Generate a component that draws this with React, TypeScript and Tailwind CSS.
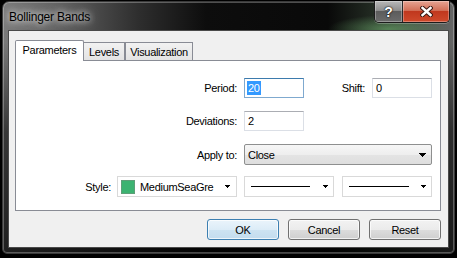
import React from "react";

function ArrowSmall() {
  return (
    <svg width="5" height="3" viewBox="0 0 5 3" shapeRendering="crispEdges">
      <rect x="0" y="0" width="5" height="1" fill="#000" />
      <rect x="1" y="1" width="3" height="1" fill="#000" />
      <rect x="2" y="2" width="1" height="1" fill="#000" />
    </svg>
  );
}

function ArrowBig() {
  return (
    <svg width="7" height="4" viewBox="0 0 7 4" shapeRendering="crispEdges">
      <rect x="0" y="0" width="7" height="1" fill="#000" />
      <rect x="1" y="1" width="5" height="1" fill="#000" />
      <rect x="2" y="2" width="3" height="1" fill="#000" />
      <rect x="3" y="3" width="1" height="1" fill="#000" />
    </svg>
  );
}

function LineSelect({ lineW }: { lineW: number }) {
  return (
    <div className="w-[90px] h-full border border-[#d9d9d9] bg-white flex items-center pl-[6px] pr-[5px]">
      <div className="h-[1px] bg-black" style={{ width: lineW }} />
      <div className="ml-auto flex items-center">
        <ArrowSmall />
      </div>
    </div>
  );
}

export default function App() {
  return (
    <div className="w-[457px] h-[258px] bg-black pt-[1px] pl-[2px] overflow-hidden font-['Liberation_Sans',Arial,sans-serif] text-[11px] tracking-[-0.3px] text-black">
      <div className="w-[453px] h-[253px] rounded-t-[7px] rounded-b-[5px] border border-[#3a3a3a] shadow-[inset_0_0_0_1px_rgba(255,255,255,0.28)] flex flex-col bg-[linear-gradient(180deg,rgba(0,0,0,0)_0px,rgba(0,0,0,0)_40px,rgba(0,0,0,0.55)_130px,rgba(0,0,0,0.75)_100%),radial-gradient(60px_14px_at_385px_27px,rgba(120,190,120,0.55),rgba(120,190,120,0)),linear-gradient(90deg,#7a7a7a_0%,#626262_12%,#2e2e2e_30%,#0d0d0d_45%,#090909_72%,#2c382c_86%,#666666_100%)]">
        {/* title bar */}
        <div className="h-[28px] shrink-0 flex items-start pl-[6px] pr-[4px]">
          <div className="mt-[7px] text-[12px] tracking-[-0.2px] leading-[16px] [text-shadow:0_0_6px_rgba(255,255,255,0.95),0_0_12px_rgba(255,255,255,0.7)]">
            Bollinger Bands
          </div>
          <div className="ml-auto -mt-[1px] w-[76px] h-[22px] flex rounded-b-[5px] border border-t-0 border-[#1c1c1c] overflow-hidden shadow-[0_1px_0_rgba(255,255,255,0.25)]">
            <div className="w-[28px] h-full flex items-center justify-center border-r border-[#2a2a2a] bg-[linear-gradient(180deg,#b8b8b8_0%,#8e8e8e_45%,#5c5c5c_50%,#6c6c6c_100%)] shadow-[inset_0_0_0_1px_rgba(255,255,255,0.3)]">
              <span className="font-['Liberation_Sans',Arial,sans-serif] font-bold text-[14px] leading-none tracking-normal text-white [text-shadow:0_0_1px_#000,0_0_2px_#000]">
                ?
              </span>
            </div>
            <div className="flex-1 h-full flex items-center justify-center bg-[linear-gradient(180deg,#e6a493_0%,#d27058_45%,#c0381e_50%,#cf4a2c_100%)] shadow-[inset_0_0_0_1px_rgba(255,255,255,0.3)]">
              <svg width="13" height="11" viewBox="0 0 13 11">
                <path d="M2.5 2 L10.5 9 M10.5 2 L2.5 9" stroke="#3a1a14" strokeWidth="4.4" strokeLinecap="square" />
                <path d="M2.5 2 L10.5 9 M10.5 2 L2.5 9" stroke="#ffffff" strokeWidth="2.4" strokeLinecap="square" />
              </svg>
            </div>
          </div>
        </div>

        {/* client area */}
        <div className="mx-[5px] h-[218px] border border-[#4a4a4a] bg-[#f0f0f0] flex flex-col pl-[6px] pt-[9px]">
          {/* tabs */}
          <div className="flex items-end h-[20px]">
            <div className="relative z-10 w-[69px] h-[21px] -mb-[1px] bg-white border border-b-0 border-[#898c95] rounded-t-[2px] text-center pt-[2px] leading-[14px]">
              Parameters
            </div>
            <div className="w-[41px] h-[18px] border-t border-r border-[#898c95] bg-[linear-gradient(180deg,#f2f2f2,#e3e3e3)] text-center pt-[2px] leading-[14px]">
              Levels
            </div>
            <div className="w-[68px] h-[18px] border border-b-0 border-[#898c95] bg-[linear-gradient(180deg,#f2f2f2,#e3e3e3)] text-center pt-[2px] leading-[14px]">
              Visualization
            </div>
          </div>

          {/* panel */}
          <div className="w-[426px] h-[151px] bg-white border border-[#898c95] flex flex-col pt-[17px] leading-[14px]">
            <div className="flex items-center h-[20px]">
              <div className="w-[221px] text-right">Period:</div>
              <div className="ml-[7px] w-[60px] h-full border border-[#7fa9cf] border-t-[#3d7bad] bg-white flex items-center pl-[2px]">
                <span className="bg-[#3399ff] text-white px-[1px] leading-[14px]">20</span>
              </div>
              <div className="w-[68px] text-right pr-[7px]">Shift:</div>
              <div className="w-[60px] h-full border border-[#dbdfe6] border-t-[#abadb3] bg-white flex items-center pl-[3px]">
                0
              </div>
            </div>

            <div className="mt-[13px] flex items-center h-[20px]">
              <div className="w-[221px] text-right">Deviations:</div>
              <div className="ml-[7px] w-[60px] h-full border border-[#dbdfe6] border-t-[#abadb3] bg-white flex items-center pl-[3px]">
                2
              </div>
            </div>

            <div className="mt-[13px] flex items-center h-[21px]">
              <div className="w-[221px] text-right">Apply to:</div>
              <div className="ml-[7px] w-[188px] h-full rounded-[2px] border border-[#8e8f8f] bg-[linear-gradient(180deg,#f6f6f6_0%,#eeeeee_50%,#e4e4e4_51%,#dedede_100%)] flex items-center pl-[3px] pr-[5px]">
                <span>Close</span>
                <div className="ml-auto flex items-center">
                  <ArrowBig />
                </div>
              </div>
            </div>

            <div className="mt-[11px] flex items-center h-[21px]">
              <div className="w-[95px] text-right">Style:</div>
              <div className="ml-[6px] w-[120px] h-full border border-[#d9d9d9] bg-white flex items-center pl-[3px] pr-[6px]">
                <div className="w-[14px] h-[14px] bg-[#3cb371] border border-[#5e9e78]" />
                <span className="ml-[5px]">MediumSeaGre</span>
                <div className="ml-auto flex items-center">
                  <ArrowSmall />
                </div>
              </div>
              <div className="ml-[7px] h-full">
                <LineSelect lineW={59} />
              </div>
              <div className="ml-[8px] h-full">
                <LineSelect lineW={60} />
              </div>
            </div>
          </div>

          {/* buttons */}
          <div className="mt-[8px] w-[426px] flex justify-end gap-[9px] leading-[14px]">
            <div className="w-[72px] h-[21px] rounded-[3px] border border-[#3c7fb1] bg-[linear-gradient(180deg,#eaf4fb_0%,#dcecf7_50%,#cde3f2_51%,#c3dcee_100%)] shadow-[inset_0_0_0_1px_rgba(255,255,255,0.7)] flex items-center justify-center">
              OK
            </div>
            <div className="w-[72px] h-[21px] rounded-[3px] border border-[#707070] bg-[linear-gradient(180deg,#f2f2f2_0%,#ebebeb_50%,#dddddd_51%,#cfcfcf_100%)] shadow-[inset_0_0_0_1px_rgba(255,255,255,0.7)] flex items-center justify-center">
              Cancel
            </div>
            <div className="w-[72px] h-[21px] rounded-[3px] border border-[#707070] bg-[linear-gradient(180deg,#f2f2f2_0%,#ebebeb_50%,#dddddd_51%,#cfcfcf_100%)] shadow-[inset_0_0_0_1px_rgba(255,255,255,0.7)] flex items-center justify-center">
              Reset
            </div>
          </div>
        </div>
      </div>
    </div>
  );
}
